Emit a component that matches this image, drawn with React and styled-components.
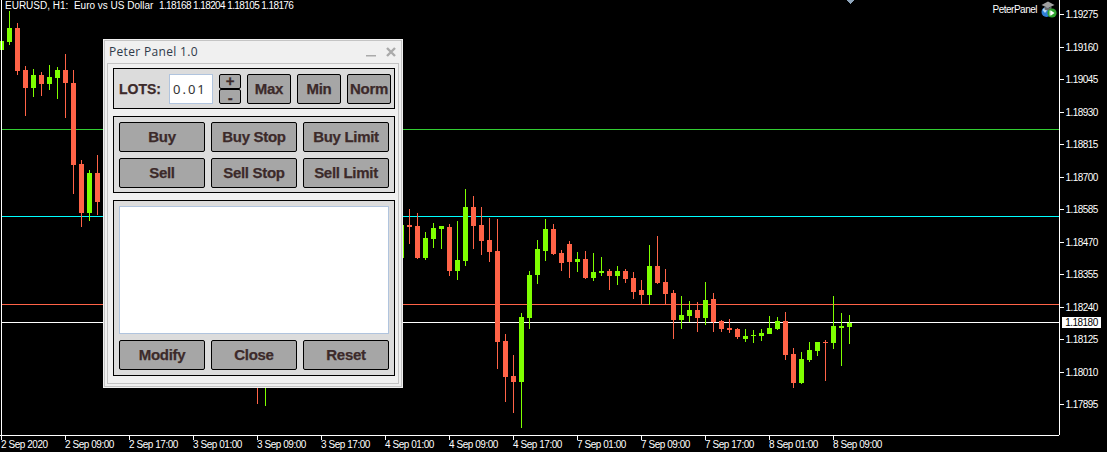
import styled, { createGlobalStyle } from "styled-components";

const RED = "#ff6347";
const GREEN = "#7fff00";

// x (wick column), wick top, wick bottom, body top, body bottom, colour
const candles = [
  [1, 38, 52, 41, 50, GREEN], [9, 11, 45, 28, 42, GREEN], [17, 23, 75, 28, 71, RED], [25, 66, 116, 70, 88, RED],
  [33, 69, 97, 75, 88, GREEN], [41, 72, 96, 75, 84, RED], [49, 65, 90, 77, 84, GREEN], [57, 67, 99, 70, 78, GREEN],
  [65, 54, 118, 70, 83, RED], [73, 70, 194, 83, 165, RED], [81, 160, 227, 164, 213, RED], [89, 170, 221, 173, 213, GREEN],
  [97, 155, 215, 173, 202, RED],
  [257, 380, 404, 380, 381, RED], [265, 380, 406, 380, 381, GREEN],
  [401, 200, 270, 225, 258, GREEN], [409, 209, 244, 225, 227, RED], [417, 213, 259, 226, 258, RED], [425, 232, 260, 238, 258, GREEN],
  [433, 223, 248, 228, 239, GREEN], [441, 226, 249, 226, 229, GREEN], [449, 224, 276, 227, 271, RED], [457, 221, 280, 260, 271, GREEN],
  [465, 189, 266, 207, 261, GREEN], [473, 196, 249, 207, 226, RED], [481, 207, 255, 225, 241, RED], [489, 218, 262, 240, 252, RED],
  [497, 219, 369, 251, 342, RED], [505, 334, 402, 341, 377, RED], [513, 355, 413, 376, 382, RED], [521, 313, 428, 317, 382, GREEN],
  [529, 271, 329, 275, 318, GREEN], [537, 240, 284, 249, 275, GREEN], [545, 219, 261, 229, 251, GREEN], [553, 224, 255, 229, 254, RED],
  [561, 250, 271, 253, 263, RED], [569, 241, 278, 244, 262, RED], [577, 252, 272, 259, 262, GREEN], [585, 251, 279, 259, 278, RED],
  [593, 253, 281, 272, 278, GREEN], [601, 257, 276, 271, 273, GREEN], [609, 269, 290, 271, 276, RED], [617, 266, 285, 271, 276, GREEN],
  [625, 269, 283, 271, 279, RED], [633, 272, 299, 278, 292, RED], [641, 280, 304, 290, 295, RED], [649, 245, 305, 266, 295, GREEN],
  [657, 236, 284, 266, 283, RED], [665, 269, 304, 282, 294, RED], [673, 290, 339, 293, 320, RED], [681, 296, 329, 315, 320, GREEN],
  [689, 301, 322, 310, 316, GREEN], [697, 302, 332, 310, 318, RED], [705, 282, 325, 300, 318, GREEN], [713, 293, 332, 299, 322, RED],
  [721, 320, 332, 321, 329, RED], [729, 319, 333, 328, 330, RED], [737, 328, 339, 329, 337, RED], [745, 329, 342, 336, 339, GREEN],
  [753, 330, 343, 335, 336, GREEN], [761, 329, 341, 333, 336, GREEN], [769, 316, 334, 328, 334, GREEN], [777, 317, 330, 321, 329, GREEN],
  [785, 312, 360, 321, 355, RED], [793, 348, 388, 354, 383, RED], [801, 352, 384, 359, 383, GREEN], [809, 342, 362, 350, 360, GREEN],
  [817, 342, 356, 342, 351, GREEN], [825, 340, 381, 342, 343, RED], [833, 296, 349, 326, 343, GREEN], [841, 313, 366, 326, 328, GREEN],
  [849, 315, 344, 323, 327, GREEN],
];

const levels = [
  [129, "#32cd32"],
  [216, "#00ffff"],
  [304, RED],
  [322, "#ffffff"],
];

const prices = ["1.19275", "1.19160", "1.19045", "1.18930", "1.18815", "1.18700", "1.18585", "1.18470", "1.18355", "1.18240", "1.18125", "1.18010", "1.17895"];
const times = ["2 Sep 2020", "2 Sep 09:00", "2 Sep 17:00", "3 Sep 01:00", "3 Sep 09:00", "3 Sep 17:00", "4 Sep 01:00", "4 Sep 09:00", "4 Sep 17:00", "7 Sep 01:00", "7 Sep 09:00", "7 Sep 17:00", "8 Sep 01:00", "8 Sep 09:00"];

const Global = createGlobalStyle`
  html, body { margin: 0; padding: 0; background: #000; }
`;

const Screen = styled.div`
  display: grid;
  grid-template-columns: 1059px 48px;
  grid-template-rows: 435px 17px;
  width: 1107px;
  height: 452px;
  overflow: hidden;
  background: #000;
  color: #fff;
  font-family: "Liberation Sans", Arial, sans-serif;
  font-size: 10px;
`;

const Chart = styled.div`
  position: relative;
`;

const ChartSvg = styled.svg`
  position: absolute;
  inset: 0;
  display: block;
`;

const ChartTitle = styled.div`
  position: absolute;
  top: 0;
  left: 5px;
  line-height: 11px;
  white-space: pre;
`;

const Quotes = styled.span`
  letter-spacing: -0.6px;
`;

const Expert = styled.div`
  position: absolute;
  top: 1px;
  right: 2px;
  display: flex;
  align-items: center;
  gap: 4px;
  height: 16px;
  letter-spacing: -0.5px;
`;

const PriceAxis = styled.div`
  position: relative;
  display: flex;
  flex-direction: column;
  padding-top: 9px;
  border-left: 1px solid #fff;
  letter-spacing: -0.55px;
`;

const PriceTick = styled.div`
  flex: 0 0 32.5px;
  display: flex;
  align-items: flex-start;
  gap: 1.5px;
  line-height: 12px;
  &::before {
    content: "";
    width: 4px;
    height: 1px;
    margin-top: 5px;
    background: #fff;
  }
`;

const PriceTag = styled.div`
  position: absolute;
  top: 317px;
  left: 2px;
  width: 39px;
  height: 11px;
  background: #fff;
  color: #000;
  line-height: 11px;
  text-align: center;
`;

const TimeAxis = styled.div`
  grid-column: 1 / 2;
  display: flex;
  padding-left: 1px;
  border-top: 1px solid #fff;
  letter-spacing: -0.45px;
`;

const TimeCell = styled.div`
  position: relative;
  flex: 0 0 64px;
  padding-top: 3px;
  line-height: 12px;
  white-space: nowrap;
  &::before {
    content: "";
    position: absolute;
    top: 0;
    left: 0;
    width: 1px;
    height: 4px;
    background: #fff;
  }
`;

const Panel = styled.div`
  position: absolute;
  top: 39px;
  left: 103px;
  box-sizing: border-box;
  width: 300px;
  height: 349px;
  border: 1px solid #f0f0f0;
`;

const Frame = styled.div`
  display: flex;
  flex-direction: column;
  box-sizing: border-box;
  height: 100%;
  border: 1px solid #c4c4c4;
  background: #f0f0f0;
  padding: 0 2px 2px;
`;

const TitleBar = styled.div`
  box-sizing: border-box;
  flex: 0 0 22px;
  display: flex;
  align-items: center;
  justify-content: space-between;
  padding: 0 3px 2px 2px;
  color: #2f3a4a;
  font-family: "Open Sans", sans-serif;
  font-size: 12px;
  letter-spacing: 0.33px;
`;

const WindowIcons = styled.div`
  display: flex;
  align-items: center;
  gap: 10px;
  padding-top: 2px;
`;

const Client = styled.div`
  flex: 1;
  display: flex;
  flex-direction: column;
  gap: 7px;
  border: 1px solid #c4c4c4;
  padding: 4px 3px 0 5px;
`;

const Section = styled.div`
  box-sizing: border-box;
  height: ${(p) => p.$h}px;
  border: 1px solid #000;
  background: #dcdcdc;
  padding: 5px 5px 4px;
`;

const LotsRow = styled.div`
  display: flex;
  align-items: center;
  gap: 6px;
  height: 30px;
  margin-right: -3px;
`;

const LotsLabel = styled.div`
  width: 44px;
  padding-bottom: 1px;
  color: #3c2a2a;
  font-weight: 700;
  font-size: 14px;
  -webkit-text-stroke: 0.25px #3c2a2a;
`;

const LotsInput = styled.div`
  box-sizing: border-box;
  width: 44px;
  height: 30px;
  border: 1px solid #b0c4de;
  background: #fff;
  padding-left: 3px;
  color: #333;
  font-family: "Noto Sans", sans-serif;
  font-size: 13px;
  letter-spacing: 2px;
  line-height: 28px;
`;

const Stepper = styled.div`
  display: flex;
  flex-direction: column;
  width: 22px;
`;

const Button = styled.div`
  box-sizing: border-box;
  display: flex;
  align-items: center;
  justify-content: center;
  width: ${(p) => p.$w}px;
  height: ${(p) => p.$h || 30}px;
  padding-bottom: ${(p) => p.$lift ?? 1}px;
  padding-top: ${(p) => p.$drop || 0}px;
  border: 1px solid #000;
  border-radius: 2px;
  background: #a6a6a6;
  color: #3c2a2a;
  font-weight: 700;
  font-size: 15px;
  letter-spacing: -0.3px;
  white-space: nowrap;
  -webkit-text-stroke: 0.25px #3c2a2a;
`;

const ButtonGrid = styled.div`
  display: grid;
  grid-template-columns: repeat(3, 86px);
  gap: 6px;
`;

const Memo = styled.div`
  box-sizing: border-box;
  height: 128px;
  margin-bottom: 6px;
  border: 1px solid #b0c4de;
  background: #fff;
`;

function ExpertIcon() {
  return (
    <svg width="16" height="17" viewBox="0 0 16 17">
      <circle cx="5.5" cy="11" r="5" fill="#2f7fd8" />
      <path d="M1.5 9 A4.5 4.5 0 0 1 8 7 L4 12 Z" fill="#b8dcf8" />
      <path d="M0.5 4 L7 0.5 L13.5 4 L7 7 Z" fill="#a0a0a0" />
      <path d="M3.5 5.5 V8.5 Q7 10.5 10.5 8.5 V5.5 L7 7 Z" fill="#6a6a6a" />
      <circle cx="11" cy="12" r="4.6" fill="#2fa32f" />
      <path d="M10 9.5 L13.5 12 L10 14.5 Z" fill="#fff" />
      <rect x="8.6" y="9.5" width="1.2" height="5" fill="#fff" />
    </svg>
  );
}

export default function App() {
  return (
    <Screen>
      <Global />
      <Chart>
        <ChartSvg width="1059" height="435" viewBox="0 0 1059 435" shapeRendering="crispEdges">
          {levels.map(([y, c]) => (
            <rect key={y} x="2" y={y} width="1057" height="1" fill={c} />
          ))}
          {candles.map(([x, wt, wb, bt, bb, c]) => (
            <g key={x} fill={c}>
              <rect x={x} y={wt} width="1" height={wb - wt} />
              <rect x={x - 2} y={bt} width="5" height={bb - bt} />
            </g>
          ))}
          <rect x="1" y="0" width="1" height="435" fill="#fff" />
          <polygon points="846,0 854,0 850,4" fill="#8fa6bc" />
        </ChartSvg>
        <ChartTitle>
          EURUSD, H1:  Euro vs US Dollar  <Quotes>1.18168 1.18204 1.18105 1.18176</Quotes>
        </ChartTitle>
        <Expert>
          PeterPanel
          <ExpertIcon />
        </Expert>
        <Panel>
          <Frame>
            <TitleBar>
              Peter Panel 1.0
              <WindowIcons>
                <svg width="10" height="10" viewBox="0 0 10 10">
                  <rect x="0" y="8" width="10" height="1.5" fill="#aaa" />
                </svg>
                <svg width="10" height="10" viewBox="0 0 10 10">
                  <path d="M1 1 L9 9 M9 1 L1 9" stroke="#aaa" strokeWidth="2.4" />
                </svg>
              </WindowIcons>
            </TitleBar>
            <Client>
              <Section $h={41}>
                <LotsRow>
                  <LotsLabel>LOTS:</LotsLabel>
                  <LotsInput>0.01</LotsInput>
                  <Stepper>
                    <Button $w={22} $h={15} $lift={3}>+</Button>
                    <Button $w={22} $h={15} $lift={0} $drop={2}>-</Button>
                  </Stepper>
                  <Button $w={44}>Max</Button>
                  <Button $w={44}>Min</Button>
                  <Button $w={44}>Norm</Button>
                </LotsRow>
              </Section>
              <Section $h={77}>
                <ButtonGrid>
                  {["Buy", "Buy Stop", "Buy Limit", "Sell", "Sell Stop", "Sell Limit"].map((t) => (
                    <Button key={t} $w={86}>{t}</Button>
                  ))}
                </ButtonGrid>
              </Section>
              <Section $h={176}>
                <Memo />
                <ButtonGrid>
                  {["Modify", "Close", "Reset"].map((t) => (
                    <Button key={t} $w={86}>{t}</Button>
                  ))}
                </ButtonGrid>
              </Section>
            </Client>
          </Frame>
        </Panel>
      </Chart>
      <PriceAxis>
        {prices.map((p) => (
          <PriceTick key={p}>{p}</PriceTick>
        ))}
        <PriceTag>1.18180</PriceTag>
      </PriceAxis>
      <TimeAxis>
        {times.map((t) => (
          <TimeCell key={t}>{t}</TimeCell>
        ))}
      </TimeAxis>
    </Screen>
  );
}
